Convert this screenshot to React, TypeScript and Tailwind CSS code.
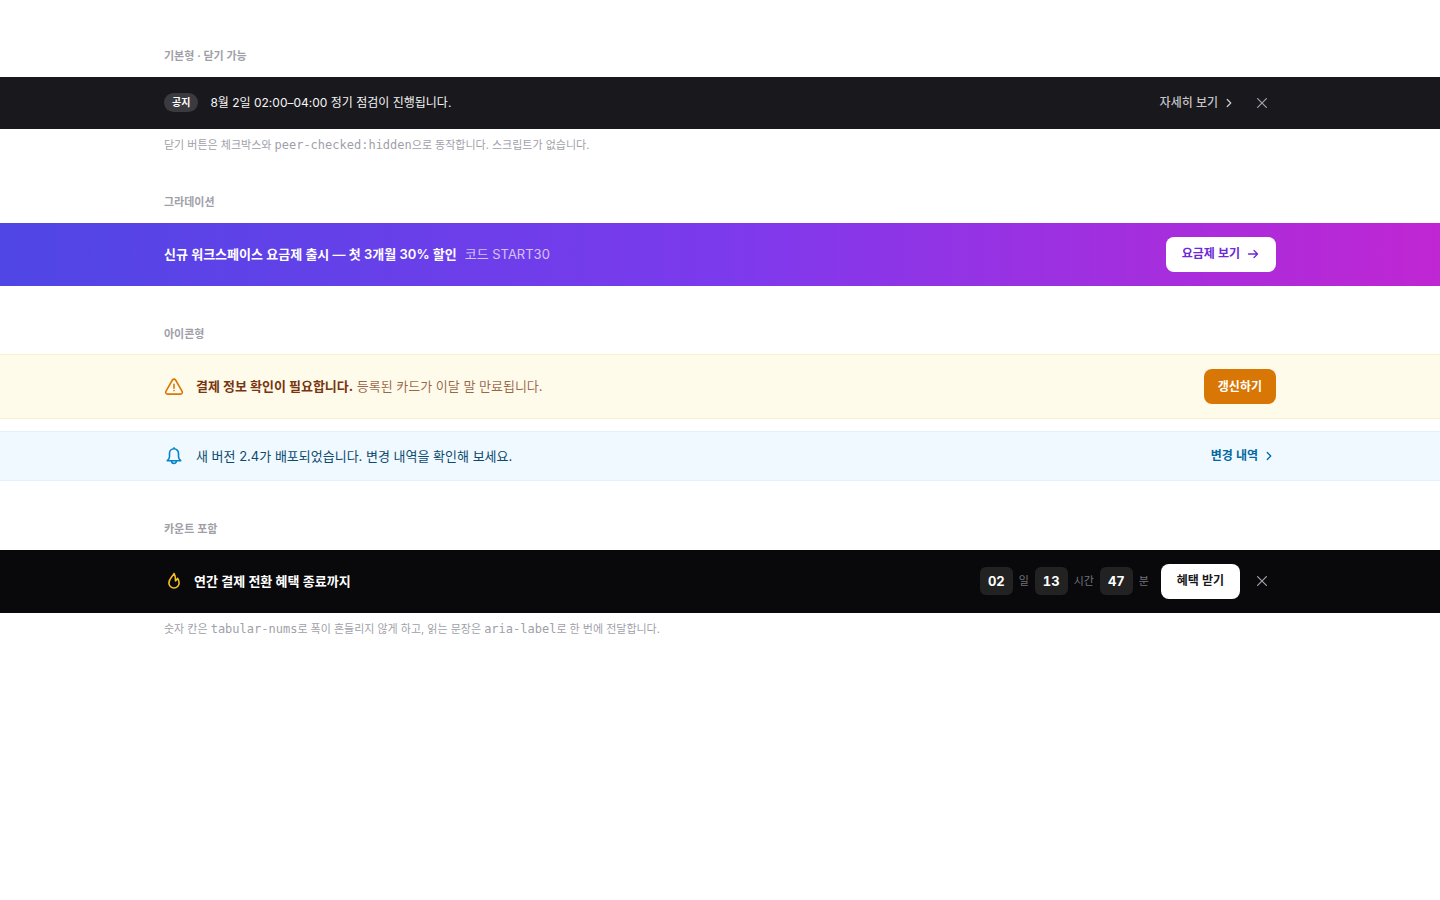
import type { ReactNode } from 'react';

function Icon({ className, children, strokeWidth = 1.6 }: { className: string; children: ReactNode; strokeWidth?: number }) {
  return (
    <svg
      className={className}
      viewBox="0 0 20 20"
      fill="none"
      stroke="currentColor"
      strokeWidth={strokeWidth}
      strokeLinecap="round"
      strokeLinejoin="round"
      aria-hidden="true"
    >
      {children}
    </svg>
  );
}

const Chevron = () => (
  <Icon className="size-3.5" strokeWidth={1.8}>
    <path d="m7.5 5 5 5-5 5" />
  </Icon>
);

const Close = () => (
  <Icon className="size-4">
    <path d="m4.5 4.5 11 11M15.5 4.5l-11 11" />
  </Icon>
);

function Section({ title, note, children }: { title: string; note?: ReactNode; children: ReactNode }) {
  return (
    <section>
      <div className="mx-auto max-w-6xl px-5">
        <h2 className="mb-3 text-[11px] leading-normal font-semibold text-zinc-400">{title}</h2>
      </div>
      {children}
      {note && (
        <div className="mx-auto max-w-6xl px-5">
          <p className="mt-2 text-[11px] leading-relaxed text-zinc-400">{note}</p>
        </div>
      )}
    </section>
  );
}

function Banner({ className, inner, children }: { className: string; inner: string; children: ReactNode }) {
  return (
    <div className={className}>
      <div className={`mx-auto flex max-w-6xl items-center px-5 ${inner}`}>{children}</div>
    </div>
  );
}

function DismissToggle({ id }: { id: string }) {
  return <input id={id} type="checkbox" className="peer sr-only" aria-label="배너 닫기" />;
}

function CloseLabel({ id, className }: { id: string; className: string }) {
  return (
    <label htmlFor={id} className={`grid size-7 cursor-pointer place-items-center rounded-md text-zinc-400 ${className}`}>
      <Close />
    </label>
  );
}

const Code = ({ children }: { children: string }) => (
  <code className="font-['DejaVu_Sans_Mono','Noto_Sans_CJK_KR',monospace] text-[12px] leading-none">{children}</code>
);

const countdown = [
  { value: '02', unit: '일' },
  { value: '13', unit: '시간' },
  { value: '47', unit: '분' },
];

export default function App() {
  return (
    <main className="flex min-h-screen flex-col gap-10 bg-white py-12 font-['Inter','Noto_Sans_CJK_KR',sans-serif] text-[13px] leading-normal antialiased">
      <Section
        title="기본형 · 닫기 가능"
        note={
          <>
            닫기 버튼은 체크박스와 <Code>peer-checked:hidden</Code>으로 동작합니다. 스크립트가 없습니다.
          </>
        }
      >
        <div className="relative">
          <DismissToggle id="close-notice" />
          <Banner className="bg-[#19181d] text-zinc-100 peer-checked:hidden" inner="gap-3 py-3">
            <span className="rounded-full bg-white/15 px-2 py-0.5 text-[10px] leading-normal font-bold text-white">공지</span>
            <p className="flex-1 text-[12px]">8월 2일 02:00–04:00 정기 점검이 진행됩니다.</p>
            <a href="#notice" className="flex items-center gap-1 text-[12px] font-medium text-white/75">
              자세히 보기
              <Chevron />
            </a>
            <CloseLabel id="close-notice" className="" />
          </Banner>
        </div>
      </Section>

      <Section title="그라데이션">
        <Banner className="bg-linear-to-r/srgb from-[#4f46e5] via-[#7c3aed] to-[#c026d3] text-white" inner="py-3.5">
          <p className="flex-1">
            <span className="font-semibold">신규 워크스페이스 요금제 출시 — 첫 3개월 30% 할인</span>
            <span className="ml-2 text-white/70">코드 START30</span>
          </p>
          <a href="#pricing" className="flex h-[35px] items-center gap-1.5 rounded-lg bg-white px-4 text-[12px] font-semibold text-[#6d28d9]">
            요금제 보기
            <Icon className="size-3.5" strokeWidth={1.8}>
              <path d="M3.5 10h13M11.5 5l5 5-5 5" />
            </Icon>
          </a>
        </Banner>
      </Section>

      <Section title="아이콘형">
        <div className="space-y-3">
          <Banner className="border-y border-[#fdeecb] bg-[#fffbeb] text-[#78350f]" inner="gap-3 py-3.5">
            <Icon className="size-5 text-[#d97706]">
              <path d="M8.4 3 1.900 14.300a1.850 1.850 0 0 0 1.600 2.800h13a1.850 1.850 0 0 0 1.600-2.800L11.600 3a1.850 1.850 0 0 0-3.200 0ZM10 7.300v3.900M10 13.500v.1" />
            </Icon>
            <p className="flex-1">
              <strong className="font-bold">결제 정보 확인이 필요합니다.</strong> <span className="text-[#78350f]/75">등록된 카드가 이달 말 만료됩니다.</span>
            </p>
            <a href="#billing" className="flex h-[35px] items-center rounded-lg bg-[#d97706] px-3.5 text-[12px] font-semibold text-white">갱신하기</a>
          </Banner>
          <Banner className="border-y border-[#e0f2fe] bg-[#f0f9ff] text-[#0c4a6e]" inner="gap-3 py-3.5">
            <Icon className="size-5 text-[#0284c7]">
              <path d="M10 2.800a4.500 4.500 0 0 0-4.500 4.500v3.400c0 1.700-.900 2.800-2.200 4h13.400c-1.300-1.200-2.200-2.300-2.200-4V7.300A4.500 4.500 0 0 0 10 2.800ZM10 2.800v-.900M7.600 15a2.400 2.400 0 0 0 4.800 0" />
            </Icon>
            <p className="flex-1">새 버전 2.4가 배포되었습니다. 변경 내역을 확인해 보세요.</p>
            <a href="#changelog" className="flex items-center gap-1 text-[12px] font-semibold text-[#0369a1]">
              변경 내역
              <Chevron />
            </a>
          </Banner>
        </div>
      </Section>

      <Section
        title="카운트 포함"
        note={
          <>
            숫자 칸은 <Code>tabular-nums</Code>로 폭이 흔들리지 않게 하고, 읽는 문장은 <Code>aria-label</Code>로 한 번에 전달합니다.
          </>
        }
      >
        <div className="relative">
          <DismissToggle id="close-offer" />
          <Banner className="bg-zinc-950 text-white peer-checked:hidden" inner="gap-3 py-3.5">
            <div className="flex flex-1 items-center gap-2.5">
              <Icon className="size-5 text-[#fbbf24]">
                <path d="M10 2.500C8.500 5.500 4.900 7.600 4.900 11.900a5.100 5.100 0 0 0 10.200 0c0-1.800-.600-3.400-1.600-4.600-.300 1.300-.900 2-2 2.600.200-2.800-.200-5.400-1.500-7.400Z" />
              </Icon>
              <p className="font-semibold">연간 결제 전환 혜택 종료까지</p>
            </div>
            <div role="timer" aria-label="2일 13시간 47분 남음" className="flex items-center gap-1.5 text-[11px] text-zinc-500">
              {countdown.map(({ value, unit }) => (
                <div key={unit} className="flex items-center gap-1.5">
                  <span className="flex h-7 min-w-8 items-center justify-center rounded-md bg-white/10 px-2 text-[13px] font-bold text-white tabular-nums">{value}</span>
                  {unit}
                </div>
              ))}
            </div>
            <a href="#offer" className="flex h-[35px] items-center rounded-lg bg-white px-4 text-[12px] font-semibold text-zinc-900">혜택 받기</a>
            <CloseLabel id="close-offer" className="-ml-1" />
          </Banner>
        </div>
      </Section>
    </main>
  );
}
